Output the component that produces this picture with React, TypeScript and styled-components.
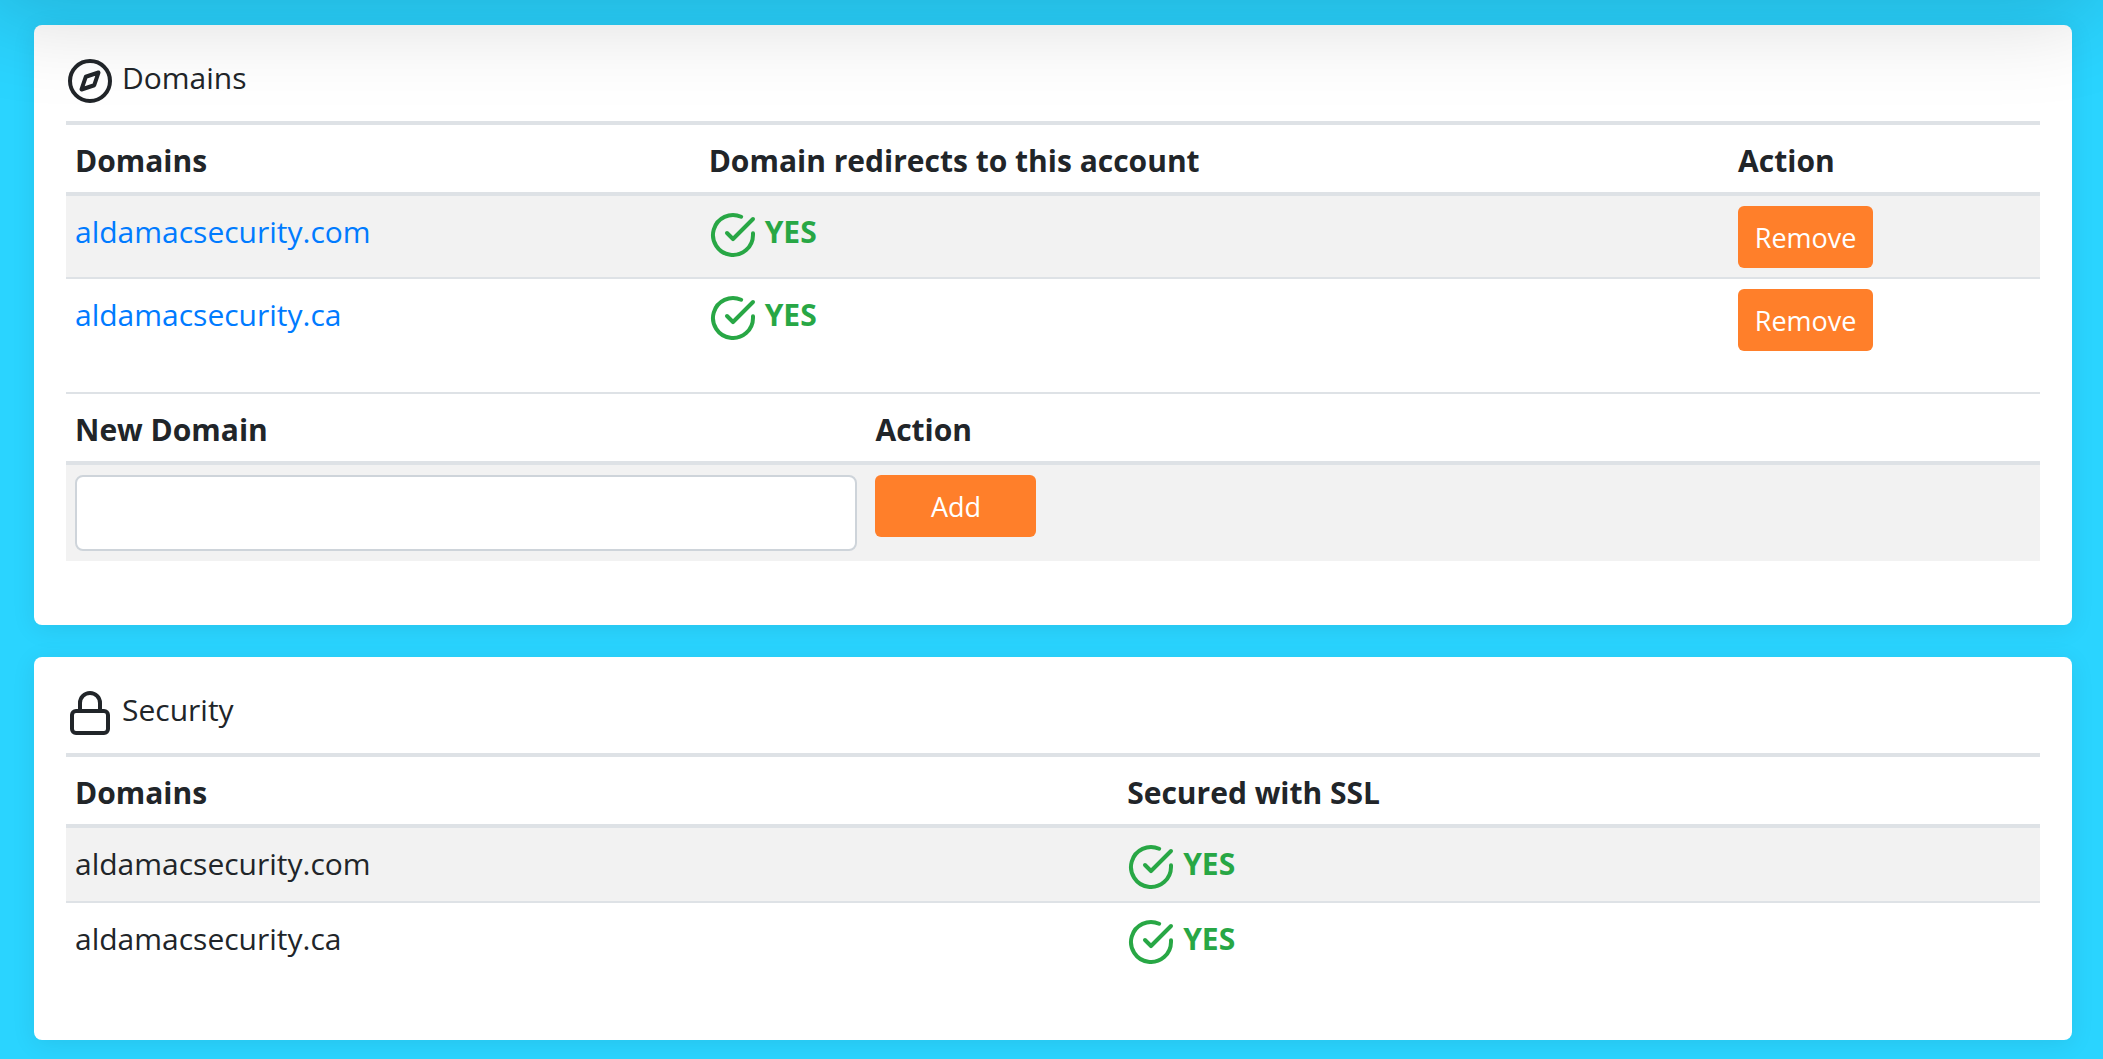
import React, { useState } from "react";
import styled, { createGlobalStyle } from "styled-components";

const GlobalStyle = createGlobalStyle`
  *, *::before, *::after { box-sizing: border-box; }
  body {
    margin: 0;
    background: #2ad4ff;
    color: #212529;
    font-family: "Segoe UI", "Open Sans", "Noto Sans", sans-serif;
    font-size: 30px;
    line-height: 48px;
  }
`;

const Page = styled.main`
  position: relative;
  display: flex;
  flex-direction: column;
  gap: 32px;
  min-height: 100vh;
  padding: 25px 31px 18px 34px;
  overflow: hidden;
`;

/* Shadow cast by the panel that sits above the visible area. */
const TopShadow = styled.div`
  position: absolute;
  z-index: 1;
  top: -220px;
  left: -16px;
  right: 8px;
  height: 200px;
  box-shadow: 0 32px 96px rgba(0, 0, 0, 0.175);
  pointer-events: none;
`;

const Card = styled.section`
  padding: 32px;
  background: #fff;
  border-radius: 8px;
  box-shadow: 0 4px 24px rgba(0, 0, 0, 0.08);
`;

const CardTitle = styled.h2`
  display: flex;
  align-items: center;
  gap: 8px;
  margin: 0 0 16px;
  font-size: 30px;
  font-weight: 400;
`;

const Icon = styled.svg`
  flex: none;
  display: block;
  width: 48px;
  height: 48px;
  fill: none;
  stroke: currentColor;
  stroke-width: 2;
  stroke-linecap: round;
  stroke-linejoin: round;
`;

const IconLabel = styled.span`
  padding-bottom: 6px;
  line-height: 42px;
`;

const Table = styled.table<{ $thinTop?: boolean }>`
  width: 100%;
  margin-bottom: 32px;
  border-spacing: 0;
  table-layout: fixed;

  th, td {
    padding: 10px 9px 9px;
    text-align: left;
    vertical-align: top;
  }
  th {
    padding: 12px 9px 7px;
    border-top: ${(p) => (p.$thinTop ? 2 : 4)}px solid #dee2e6;
    border-bottom: 4px solid #dee2e6;
    font-weight: 700;
  }
  tbody tr:nth-child(odd) { background: #f2f2f2; }
  tbody tr + tr td { border-top: 2px solid #dee2e6; }
`;

const Col = styled.col<{ $width?: string }>`
  width: ${(p) => p.$width ?? "auto"};
`;

const Row = styled.tr<{ $height: number }>`
  height: ${(p) => p.$height}px;
`;

const DomainName = styled.div`
  padding-top: 2px;
`;

const DomainLink = styled.a`
  color: #007bff;
  text-decoration: none;
`;

const Status = styled.span`
  display: flex;
  align-items: center;
  gap: 8px;
  padding-top: 5px;
  color: #28a745;
  font-weight: 700;
`;

const Button = styled.button<{ $wide?: boolean }>`
  display: block;
  min-width: ${(p) => (p.$wide ? 161 : 135)}px;
  height: 62px;
  padding: 2px 16px 0;
  border: 0;
  border-radius: 6px;
  background: #ff7f2a;
  color: #fff;
  font: inherit;
  font-size: 27px;
  cursor: pointer;
`;

const TextBox = styled.input`
  display: block;
  width: 100%;
  height: 76px;
  padding: 12px 24px;
  border: 2px solid #ced4da;
  border-radius: 8px;
  background: #fff;
  color: #495057;
  font: inherit;
`;

const CompassIcon = () => (
  <Icon viewBox="0 0 24 24" aria-hidden="true">
    <circle cx="12" cy="12" r="10" />
    <polygon points="16.24 7.76 14.12 14.12 7.76 16.24 9.88 9.88 16.24 7.76" />
  </Icon>
);

const LockIcon = () => (
  <Icon viewBox="0 0 24 24" aria-hidden="true">
    <rect x="3" y="11" width="18" height="11" rx="2" ry="2" />
    <path d="M7 11V7a5 5 0 0 1 10 0v4" />
  </Icon>
);

const Yes = () => (
  <Status>
    <Icon viewBox="0 0 24 24" aria-hidden="true">
      <path d="M22 11.08V12a10 10 0 1 1-5.93-9.14" />
      <polyline points="22 4 12 14.01 9 11.01" />
    </Icon>
    <IconLabel>YES</IconLabel>
  </Status>
);

const domains = ["aldamacsecurity.com", "aldamacsecurity.ca"];

export default function App() {
  const [name, setName] = useState("");
  return (
    <>
      <GlobalStyle />
      <Page>
        <TopShadow />
        <Card>
          <CardTitle>
            <CompassIcon />
            <IconLabel>Domains</IconLabel>
          </CardTitle>
          <Table>
            <colgroup>
              <Col $width="32.1%" />
              <Col $width="52.15%" />
              <Col />
            </colgroup>
            <thead>
              <tr>
                <th scope="col">Domains</th>
                <th scope="col">Domain redirects to this account</th>
                <th scope="col">Action</th>
              </tr>
            </thead>
            <tbody>
              {domains.map((d, i) => (
                <Row key={d} $height={i ? 83 : 81}>
                  <td>
                    <DomainName>
                      <DomainLink href={`https://${d}`}>{d}</DomainLink>
                    </DomainName>
                  </td>
                  <td><Yes /></td>
                  <td><Button type="button">Remove</Button></td>
                </Row>
              ))}
            </tbody>
          </Table>
          <Table $thinTop>
            <colgroup>
              <Col $width="40.55%" />
              <Col />
            </colgroup>
            <thead>
              <tr>
                <th scope="col" id="new-domain">New Domain</th>
                <th scope="col">Action</th>
              </tr>
            </thead>
            <tbody>
              <Row $height={96}>
                <td>
                  <TextBox
                    type="text"
                    aria-labelledby="new-domain"
                    value={name}
                    onChange={(e) => setName(e.target.value)}
                  />
                </td>
                <td><Button type="button" $wide>Add</Button></td>
              </Row>
            </tbody>
          </Table>
        </Card>
        <Card>
          <CardTitle>
            <LockIcon />
            <IconLabel>Security</IconLabel>
          </CardTitle>
          <Table>
            <colgroup>
              <Col $width="53.3%" />
              <Col />
            </colgroup>
            <thead>
              <tr>
                <th scope="col">Domains</th>
                <th scope="col">Secured with SSL</th>
              </tr>
            </thead>
            <tbody>
              {domains.map((d, i) => (
                <Row key={d} $height={i ? 75 : 73}>
                  <td><DomainName>{d}</DomainName></td>
                  <td><Yes /></td>
                </Row>
              ))}
            </tbody>
          </Table>
        </Card>
      </Page>
    </>
  );
}
